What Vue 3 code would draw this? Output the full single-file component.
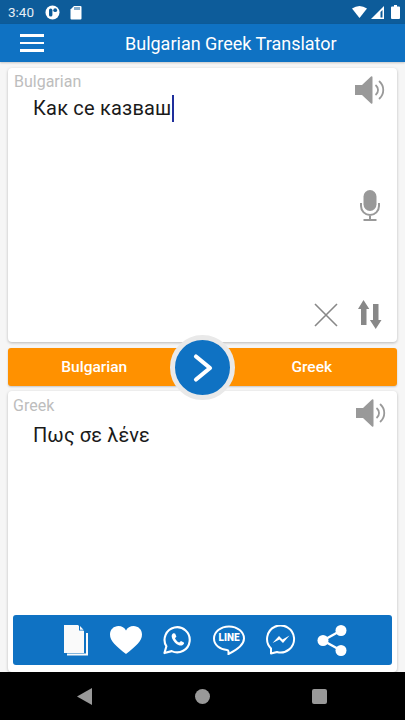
<script setup>
const sourceText = "Как се казваш";
const targetText = "Πως σε λένε";
</script>

<template>
  <div class="screen">
    <div class="status-bar">
      <span class="time">3:40</span>
      <svg class="st-icon" width="15" height="15" viewBox="0 0 15 15">
        <circle cx="7.5" cy="7.5" r="7" fill="#fff" />
        <rect x="4" y="3.6" width="3.4" height="8" rx="1.7" fill="#0d5c9a" />
        <circle cx="10.2" cy="5.2" r="1.9" fill="#0d5c9a" />
      </svg>
      <svg class="st-icon sd" width="12" height="15" viewBox="0 0 12 15">
        <path d="M4 1h6.500a1 1 0 0 1 1 1v11.500a1 1 0 0 1-1 1h-9a1 1 0 0 1-1-1V4.500z" fill="#fff" />
        <path d="M5 2v3M7 2v3M9 2v3" stroke="#0d5c9a" stroke-width="1" />
      </svg>
      <div class="status-right">
        <svg width="15" height="12" viewBox="0 0 15 12"><path d="M0 2.500Q7.500-2.500 15 2.500L7.500 12z" fill="#fff" /></svg>
        <svg width="13" height="13" viewBox="0 0 13 13">
          <path d="M13 0v13H0z" fill="#fff" />
          <path d="M11.500 4v7.500H9.500V6z" fill="#0d5c9a" />
        </svg>
        <svg class="battery" width="9" height="14" viewBox="0 0 9 14">
          <path d="M3 0h3v1.500h2a1 1 0 0 1 1 1V13a1 1 0 0 1-1 1H1a1 1 0 0 1-1-1V2.500a1 1 0 0 1 1-1h2z" fill="#fff" />
        </svg>
      </div>
    </div>

    <header class="app-bar">
      <div class="menu"><i></i><i></i><i></i></div>
      <h1>Bulgarian Greek Translator</h1>
    </header>

    <main class="content">
      <section class="card source">
        <div class="label">Bulgarian</div>
        <div class="text">{{ sourceText }}<span class="caret"></span></div>
        <svg class="speaker" width="30" height="28" viewBox="0 0 30 28">
          <path d="M0 9h7l9-8.500a1 1 0 0 1 1.500.8v25.400a1 1 0 0 1-1.500.8L7 19H0z" fill="#999" />
          <path d="M21 9.500a6 6 0 0 1 0 9M24.500 5.500a11.500 11.500 0 0 1 0 17" fill="none" stroke="#999" stroke-width="1.800" stroke-linecap="round" />
        </svg>
        <svg class="mic" width="20" height="31" viewBox="0 0 20 31">
          <rect x="3.500" y="0" width="13" height="21" rx="6.500" fill="#999" />
          <path d="M1 13v3a9 9 0 0 0 18 0v-3M10 25v4M3.500 30h13" fill="none" stroke="#999" stroke-width="2" />
        </svg>
        <svg class="clear" width="24" height="24" viewBox="0 0 24 24">
          <path d="M1 1l22 22M23 1L1 23" stroke="#888" stroke-width="1.600" fill="none" />
        </svg>
        <svg class="swap-v" width="25" height="29" viewBox="0 0 25 29">
          <path d="M6.500 0l5.800 9H9.500v16h-5.500V9H1zM16 4h5.500v16h3L18.700 29l-5.800-9H16z" fill="#888" />
        </svg>
      </section>

      <div class="lang-bar">
        <span class="lang">Bulgarian</span>
        <span class="lang">Greek</span>
        <div class="go">
          <svg width="22" height="30" viewBox="0 0 22 30">
            <path d="M4 3.500l14 11.500-14 11.500" fill="none" stroke="#fff" stroke-width="4.200" stroke-linecap="round" stroke-linejoin="round" />
          </svg>
        </div>
      </div>

      <section class="card target">
        <div class="label">Greek</div>
        <div class="text">{{ targetText }}</div>
        <svg class="speaker" width="30" height="28" viewBox="0 0 30 28">
          <path d="M0 9h7l9-8.500a1 1 0 0 1 1.500.8v25.400a1 1 0 0 1-1.500.8L7 19H0z" fill="#999" />
          <path d="M21 9.500a6 6 0 0 1 0 9M24.500 5.500a11.500 11.500 0 0 1 0 17" fill="none" stroke="#999" stroke-width="1.800" stroke-linecap="round" />
        </svg>
        <div class="actions">
          <svg width="26" height="31" viewBox="0 0 26 31">
            <path d="M1 0h14l6 6v22H1z" fill="#fafafa" />
            <path d="M16 0l5 5.500h-5z" fill="#0f72c3" />
            <path d="M17 1l3.500 3.800H17z" fill="#fafafa" />
            <path d="M24 8v21.500H4" fill="none" stroke="#fafafa" stroke-width="2" />
          </svg>
          <svg width="32" height="28" viewBox="0 0 32 28">
            <path d="M16 28C6 20 0 15 0 8.500 0 3.500 3.800 0 8.500 0 11.800 0 14.600 1.700 16 4.500 17.400 1.700 20.200 0 23.500 0 28.200 0 32 3.500 32 8.500 32 15 26 20 16 28z" fill="#fff" />
          </svg>
          <svg width="29" height="30" viewBox="0 0 30 30">
            <path d="M1.500 28.500l2-7A13 13 0 1 1 9 26.500z" fill="none" stroke="#fff" stroke-width="2.200" stroke-linejoin="round" />
            <path d="M10.500 8c-1.500 1-2 3-1 5.500 1.500 3.500 4 6 7 7 2.500.8 4.500 0 5.300-1.800l-.2-1-3-1.600-1.700 1.600c-2-.7-3.800-2.600-4.500-4.500l1.500-1.700-1.400-3.300z" fill="#fff" />
          </svg>
          <div class="line-icon">
            <svg width="32" height="30" viewBox="0 0 32 30">
              <path d="M16 1.500C7.500 1.500 1 7 1 13.500S7 24.500 14 25c1 .1 1.500.6 1.500 1.500v2.500c4-2 15.500-7.500 15.500-15.500C31 7 24.500 1.500 16 1.500z" fill="none" stroke="#fff" stroke-width="2" />
            </svg>
            <span>LINE</span>
          </div>
          <svg width="30" height="30" viewBox="0 0 30 30">
            <path d="M5 28.500v-5A13.500 13.500 0 1 1 11 27z" fill="none" stroke="#fff" stroke-width="2" stroke-linejoin="round" />
            <path d="M6.500 18l6.500-7 3.500 3.500L23.500 10.500 17 18l-3.500-3.500z" fill="#fff" />
          </svg>
          <svg width="30" height="31" viewBox="0 0 30 31">
            <path d="M6 15.500L24 5.500M6 15.500l18 10" stroke="#fff" stroke-width="2.500" />
            <circle cx="6" cy="15.500" r="5.500" fill="#fff" />
            <circle cx="24" cy="5.500" r="5.500" fill="#fff" />
            <circle cx="24" cy="25.500" r="5.500" fill="#fff" />
          </svg>
        </div>
      </section>
    </main>

    <nav class="nav-bar">
      <svg width="15" height="17" viewBox="0 0 15 17"><path d="M15 0v17L0 8.500z" fill="#999" /></svg>
      <span class="dot"></span>
      <span class="square"></span>
    </nav>
  </div>
</template>

<style>
html, body {
  margin: 0;
  background: #f6f6f6;
}
</style>

<style scoped>
.screen {
  width: 405px;
  height: 720px;
  display: flex;
  flex-direction: column;
  overflow: hidden;
  background: #f6f6f6;
  font-family: Roboto, "Noto Sans", sans-serif;
}

.status-bar {
  height: 24px;
  flex: none;
  background: #0d5c9a;
  display: flex;
  align-items: center;
  color: #fff;
  padding: 0 5px 0 8px;
  box-sizing: border-box;
}

.time {
  font-size: 13.500px;
  margin-right: 11px;
  color: #e6eef5;
}

.st-icon {
  margin-right: 10px;
}

.status-right {
  margin-left: auto;
  display: flex;
  align-items: center;
  gap: 4px;
}

.battery {
  margin-left: 3px;
}

.app-bar {
  height: 38px;
  flex: none;
  background: #0f72c3;
  display: flex;
  align-items: center;
  padding-left: 20px;
  box-shadow: 0 1px 2px rgba(0, 0, 0, 0.2);
  position: relative;
}

.menu {
  width: 24px;
  display: flex;
  flex-direction: column;
  gap: 5px;
}

.menu i {
  display: block;
  height: 2.500px;
  background: #fff;
}

.app-bar h1 {
  margin: 0 0 0 81px;
  font-size: 18px;
  font-weight: 400;
  color: #fff;
  white-space: nowrap;
}

.content {
  flex: 1;
  display: flex;
  flex-direction: column;
  padding: 6px 8px 0;
  min-height: 0;
}

.card {
  background: #fff;
  border-radius: 4px;
  box-shadow: 0 1px 3px rgba(0, 0, 0, 0.25);
  position: relative;
  box-sizing: border-box;
}

.source {
  height: 274px;
}

.target {
  flex: 1;
  display: flex;
  flex-direction: column;
  padding-bottom: 7px;
}

.label {
  color: #bdbdbd;
  font-size: 16px;
  line-height: 20px;
  padding: 4px 0 0 6px;
}

.target .label {
  padding: 5px 0 0 5px;
}

.text {
  font-size: 20px;
  line-height: 28px;
  color: #1a1a1a;
  padding-left: 25px;
  margin-top: 2px;
  letter-spacing: 0.2px;
  display: flex;
  align-items: center;
}

.target .text {
  margin-top: 5px;
  letter-spacing: 0.1px;
}

.caret {
  width: 1.500px;
  height: 27px;
  background: #1f2f9c;
  margin-left: 1px;
}

.speaker {
  position: absolute;
  top: 8px;
  right: 12px;
}

.target .speaker {
  top: 8px;
  right: 11px;
}

.mic {
  position: absolute;
  top: 122px;
  right: 17px;
}

.clear {
  position: absolute;
  top: 235px;
  right: 59px;
}

.swap-v {
  position: absolute;
  top: 232px;
  right: 15px;
}

.lang-bar {
  height: 38px;
  flex: none;
  margin: 6px 0 5px;
  background: #ff9100;
  border-radius: 3px;
  box-shadow: 0 1px 2px rgba(0, 0, 0, 0.2);
  display: grid;
  grid-template-columns: 1fr 1fr;
  align-items: center;
  position: relative;
  z-index: 1;
}

.lang {
  color: #fff;
  font-size: 15.500px;
  font-weight: 500;
  text-align: center;
}

.lang:first-child {
  padding-right: 22px;
}

.lang:nth-child(2) {
  padding-left: 24px;
}

.go {
  position: absolute;
  left: 162px;
  top: -13px;
  width: 55px;
  height: 55px;
  border: 5px solid #e9e9e9;
  border-radius: 50%;
  background: #0f72c3;
  display: flex;
  align-items: center;
  justify-content: center;
}

.actions {
  margin: auto 5px 0;
  height: 50px;
  background: #0f72c3;
  border-radius: 3px;
  display: flex;
  align-items: center;
  gap: 21px;
  padding-left: 50px;
  flex: none;
}

.line-icon {
  position: relative;
  width: 32px;
  height: 30px;
}

.line-icon span {
  position: absolute;
  left: 0;
  right: 0;
  top: 7px;
  text-align: center;
  color: #fff;
  font-size: 10px;
  font-weight: 900;
  line-height: 12px;
}

.nav-bar {
  height: 48px;
  flex: none;
  background: #000;
  display: flex;
  align-items: center;
  position: relative;
}

.nav-bar svg {
  margin-left: 77px;
}

.dot {
  width: 15px;
  height: 15px;
  border-radius: 50%;
  background: #999;
  margin-left: 103px;
}

.square {
  width: 15px;
  height: 15px;
  border-radius: 2px;
  background: #999;
  margin-left: 102px;
}
</style>
